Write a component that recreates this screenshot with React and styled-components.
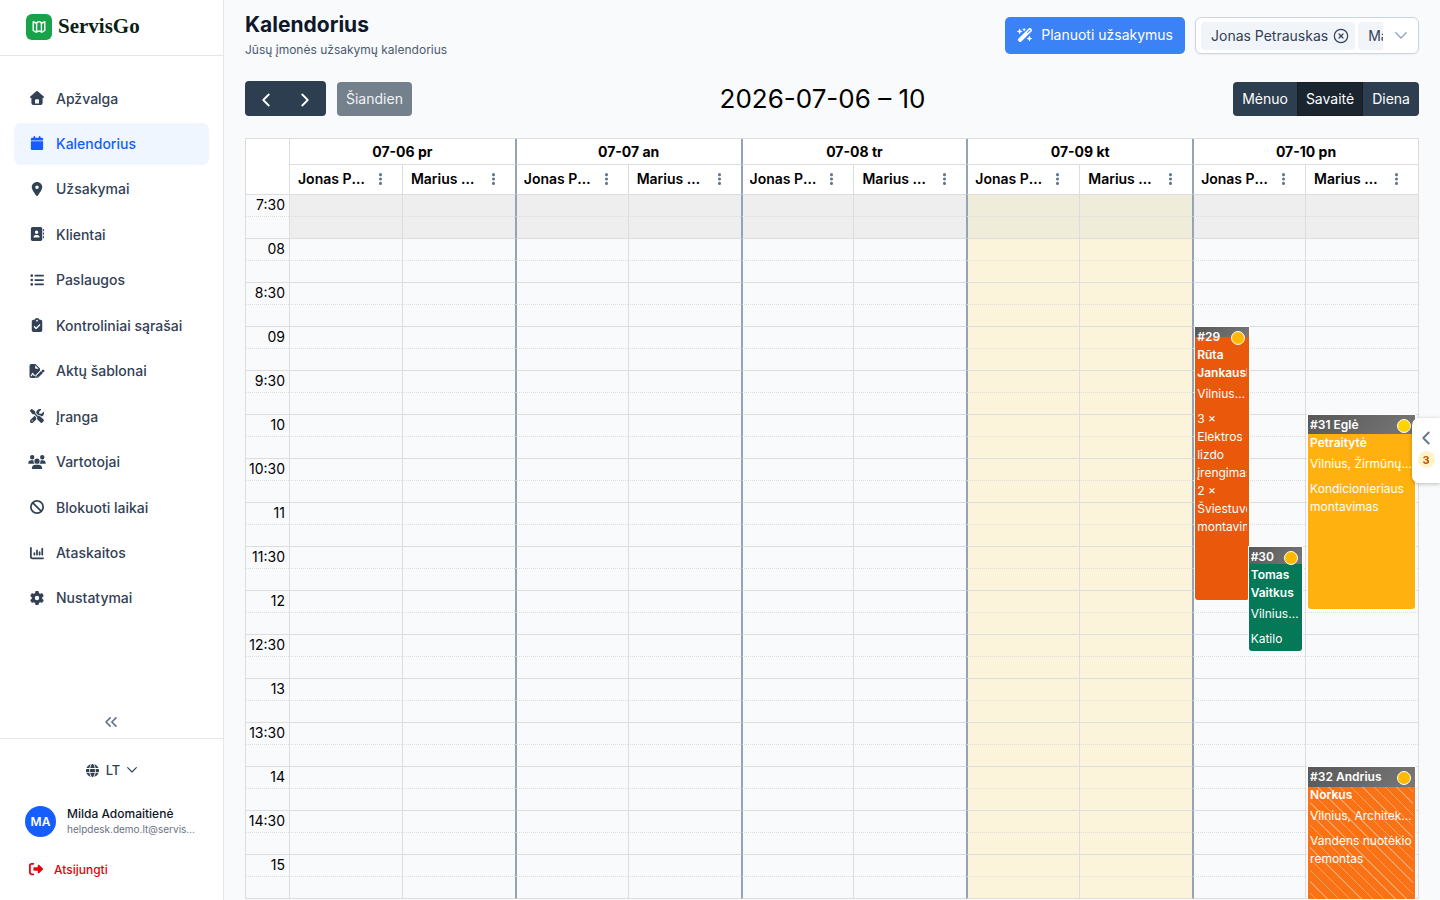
import React from "react";
import styled, { createGlobalStyle, css } from "styled-components";
import {
  FaCalendar,
  FaLocationDot,
  FaAddressBook,
  FaListUl,
  FaClipboardCheck,
  FaScrewdriverWrench,
  FaUsers,
  FaBan,
  FaChartColumn,
  FaGear,
  FaGlobe,
  FaRightFromBracket,
  FaWandMagicSparkles,
  FaEllipsisVertical,
} from "react-icons/fa6";
import { ChevronLeft, ChevronRight, ChevronsLeft, CircleX } from "lucide-react";

const line = "#dddddd";
const ink = "#334155";

const GlobalStyle = createGlobalStyle`
  *, *::before, *::after { box-sizing: border-box; }
  body {
    margin: 0;
    background: #f9fafc;
    color: #000;
    font-family: Inter, "Liberation Sans", sans-serif;
    font-size: 14px;
  }
  button { font: inherit; border: 0; padding: 0; background: none; color: inherit; cursor: pointer; }
  a { color: inherit; text-decoration: none; }
  h1, h2, p, ul { margin: 0; padding: 0; }
  svg { display: block; flex: none; }
`;

const Shell = styled.div`
  display: flex;
  height: 100vh;
  overflow: hidden;
`;

const Sidebar = styled.aside`
  flex: none;
  display: flex;
  flex-direction: column;
  width: 224px;
  background: #fff;
  border-right: 1px solid #e5e7eb;
`;

const Brand = styled.a`
  display: flex;
  align-items: center;
  gap: 6px;
  height: 56px;
  padding: 0 26px 2px;
  border-bottom: 1px solid #e5e7eb;
  color: #0b1f14;
  font-family: "Liberation Serif", serif;
  font-size: 21px;
  font-weight: 700;
`;

const BrandMark = styled.span`
  display: grid;
  place-items: center;
  width: 26px;
  height: 26px;
  border-radius: 6px;
  background: #16a34a;
`;

const NavList = styled.ul`
  display: flex;
  flex-direction: column;
  justify-content: space-between;
  min-height: 542px;
  margin: 22px 14px 0;
  list-style: none;
`;

const NavLink = styled.a`
  display: flex;
  align-items: center;
  gap: 10px;
  height: 42px;
  padding: 0 14px 2px;
  border-radius: 7px;
  color: ${(p) => (p.$active ? "#155dfc" : ink)};
  background: ${(p) => (p.$active ? "#eff6ff" : "transparent")};
  font-weight: 500;
`;

const NavIcon = styled.span`
  svg { width: 18px; height: 14px; }
`;

const CollapseButton = styled.button`
  display: flex;
  justify-content: center;
  margin-top: auto;
  padding: 6px 2px 6px 0;
  color: #64748b;
`;

const SidebarFooter = styled.div`
  display: flex;
  flex-direction: column;
  height: 162px;
  border-top: 1px solid #e5e7eb;
`;

const LanguageButton = styled.button`
  display: flex;
  align-items: center;
  justify-content: center;
  gap: 7px;
  margin-top: 21px;
  height: 20px;
  color: ${ink};
  font-size: 13px;
  font-weight: 500;
`;

const User = styled.div`
  display: flex;
  align-items: center;
  gap: 11px;
  margin: 26px 25px 0;
`;

const Avatar = styled.span`
  flex: none;
  display: grid;
  place-items: center;
  width: 31px;
  height: 31px;
  border-radius: 50%;
  background: #155dfc;
  color: #fff;
  font-size: 12px;
  font-weight: 600;
`;

const UserText = styled.div`
  min-width: 0;
  font-size: 12px;
  font-weight: 500;
  line-height: 16px;
  color: #0f172a;
`;

const UserMail = styled.p`
  overflow: hidden;
  text-overflow: ellipsis;
  white-space: nowrap;
  color: #6b7280;
  font-size: 10px;
  font-weight: 400;
  line-height: 15px;
`;

const LogoutButton = styled.button`
  display: flex;
  align-items: center;
  gap: 11px;
  margin: 23px 29px 0;
  height: 18px;
  color: #e7000b;
  font-size: 12px;
  font-weight: 500;
`;

const Main = styled.main`
  flex: 1;
  min-width: 0;
  display: flex;
  flex-direction: column;
  padding: 0 21px 1px;
`;

const PageHeader = styled.header`
  display: flex;
  justify-content: space-between;
  align-items: flex-start;
  padding-top: 12px;
  height: 81px;
`;

const PageTitle = styled.h1`
  color: #0f172a;
  font-size: 21px;
  font-weight: 700;
  line-height: 26px;
`;

const PageSubtitle = styled.p`
  margin-top: 4px;
  color: #4b5b70;
  font-size: 12px;
  line-height: 16px;
`;

const HeaderActions = styled.div`
  display: flex;
  gap: 10px;
  padding-top: 5px;
`;

const PlanButton = styled.button`
  display: flex;
  align-items: center;
  gap: 8px;
  height: 37px;
  padding: 0 12px 2px;
  border-radius: 5px;
  background: #3b82f6;
  color: #fff;
  white-space: nowrap;
`;

const MultiSelect = styled.div`
  display: flex;
  align-items: center;
  width: 224px;
  height: 37px;
  padding: 0 11px 0 5px;
  border: 1px solid #cbd5e1;
  border-radius: 6px;
  background: #fff;
  box-shadow: 0 1px 2px rgba(18, 18, 23, 0.05);
  color: ${ink};
`;

const Chips = styled.div`
  flex: 1;
  display: flex;
  gap: 3px;
  overflow: hidden;
`;

const Chip = styled.span`
  flex: none;
  display: flex;
  align-items: center;
  gap: 5px;
  height: 28px;
  padding: 0 6px 0 10px;
  border-radius: 4px;
  background: #f1f5f9;
  white-space: nowrap;
`;

const SelectToggle = styled.button`
  margin-left: 12px;
  color: #94a3b8;
`;

const Toolbar = styled.div`
  display: flex;
  justify-content: space-between;
  align-items: center;
  height: 35px;
  margin-bottom: 22px;
`;

const ToolbarGroup = styled.div`
  display: flex;
  align-items: flex-end;
  gap: 11px;
  height: 35px;
`;

const ButtonGroup = styled.div`
  display: flex;
  overflow: hidden;
  border-radius: 4px;
`;

const toolbarButton = css`
  display: grid;
  place-items: center;
  height: 34px;
  padding: 0 10px 2px;
  background: #2c3e50;
  color: #fff;
`;

const ArrowButton = styled.button`
  ${toolbarButton}
  width: 41px;
  height: 35px;
  padding: 3px 0 0;
  & + & { width: 40px; padding-right: 2px; }
`;

const TodayButton = styled.button`
  ${toolbarButton}
  padding: 0 9px 2px;
  border-radius: 4px;
  background: #74808c;
  color: #f1f3f5;
`;

const ViewButton = styled.button`
  ${toolbarButton}
  padding: 0 9px 2px;
  ${(p) => p.$active && "background: #1a252f; box-shadow: inset 0 0 0 1px #151e27;"}
`;

const RangeTitle = styled.h2`
  font-size: 26px;
  font-weight: 400;
  line-height: 35px;
`;

const CalendarFrame = styled.section`
  position: relative;
  flex: 1;
  min-height: 0;
  overflow: hidden;
  border: 1px solid ${line};
  border-bottom: 0;
`;

const CalendarTable = styled.table`
  width: 100%;
  table-layout: fixed;
  border-collapse: separate;
  border-spacing: 0;
`;

const AxisColumn = styled.col`
  width: 43px;
`;

const edge = (p) => (p.$dayStart ? "2px solid #94a3b8" : `1px solid ${line}`);

const CornerHead = styled.th`
  padding: 0;
  background: #fff;
`;

const DayHead = styled.th`
  height: 25px;
  padding: 0;
  background: #fff;
  border-left: ${edge};
  font-weight: 700;
`;

const ResourceHead = styled.th`
  height: 30px;
  padding: 0 0 2px;
  background: #fff;
  border-top: 1px solid ${line};
  border-left: ${edge};
  font-weight: 600;
`;

const ResourceLabel = styled.div`
  display: flex;
  align-items: center;
  justify-content: space-between;
  gap: 6px;
  padding: 0 16px 0 ${(p) => (p.$dayStart ? 7 : 8)}px;
`;

const ResourceName = styled.span`
  overflow: hidden;
  text-overflow: ellipsis;
  white-space: nowrap;
`;

const MenuButton = styled.button`
  flex: none;
  width: 11px;
  color: #64748b;
  svg { width: 11px; height: 14px; }
`;

const AxisCell = styled.th`
  height: 22px;
  padding: 0 4px 2px 0;
  border-top: 1px ${(p) => (p.$minor ? "dotted" : "solid")} ${line};
  font-weight: 400;
  line-height: 18px;
  text-align: right;
`;

const Slot = styled.td`
  height: 22px;
  padding: 0;
  border-top: 1px ${(p) => (p.$minor ? "dotted" : "solid")} ${line};
  border-left: ${edge};
  background: ${(p) =>
    p.$closed ? (p.$today ? "#efecd9" : "#eeeeee") : p.$today ? "#fbf4db" : "transparent"};
`;

const EventLayer = styled.div`
  position: absolute;
  inset: 56px 0 0 43px;
  display: grid;
  grid-template-columns: repeat(10, 1fr);
  pointer-events: none;
`;

const Lane = styled.div`
  position: relative;
  grid-column: ${(p) => p.$column};
  margin: 0 3px;
`;

const EventCard = styled.article`
  position: absolute;
  top: ${(p) => p.$slot * 22}px;
  left: ${(p) => (p.$half === "right" ? "50%" : 0)};
  width: ${(p) => (p.$half ? "50%" : "100%")};
  height: ${(p) => p.$height}px;
  padding: 1px 2px;
  overflow: hidden;
  border-radius: 0 0 3px 3px;
  background: linear-gradient(135deg, #575757, #787878) top / 100% ${(p) => p.$band}px no-repeat,
    ${(p) => p.$striped
      ? "repeating-linear-gradient(45deg, transparent 0 7px, rgba(255, 255, 255, 0.32) 7px 8px) content-box,"
      : ""}
    ${(p) => p.$color};
  box-shadow: 0 0 0 1px #fff;
  color: #fff;
  font-size: 12px;
  line-height: 18px;
`;

const EventTitle = styled.p`
  overflow: hidden;
  font-weight: 600;
`;

const EventAddress = styled.p`
  margin: 3px 0 7px;
  overflow: hidden;
  text-overflow: ellipsis;
  white-space: nowrap;
`;

const EventBody = styled.div`
  overflow: hidden;
`;

const StatusDot = styled.span`
  position: absolute;
  top: 4px;
  right: 4px;
  width: 14px;
  height: 14px;
  border: 1px solid #fff;
  border-radius: 50%;
  background: ${(p) => p.$color};
`;

const SideTab = styled.button`
  position: fixed;
  top: 418px;
  right: 0;
  display: flex;
  flex-direction: column;
  align-items: center;
  gap: 2px;
  width: 28px;
  height: 65px;
  padding-top: 9px;
  border-radius: 7px 0 0 7px;
  background: #fff;
  box-shadow: 0 1px 4px rgba(0, 0, 0, 0.25);
  color: #64748b;
`;

const CountBadge = styled.span`
  display: grid;
  place-items: center;
  width: 17px;
  height: 17px;
  border-radius: 50%;
  background: #fef3c6;
  color: #bb4d00;
  font-size: 11px;
  font-weight: 700;
`;

function HouseIcon() {
  return (
    <svg viewBox="0 0 18 14" fill="currentColor">
      <path
        fillRule="evenodd"
        d="M8.3.3a1 1 0 0 1 1.4 0l6 5.3c.6.6.2 1.5-.6 1.5h-.5v4.9a2 2 0 0 1-2 2H5.4a2 2 0 0 1-2-2V7.100h-.5c-.8 0-1.200-.9-.6-1.500ZM8 8.300a1 1 0 0 0-1 1v3.200h4V9.300a1 1 0 0 0-1-1Z"
      />
    </svg>
  );
}

function FileSignIcon() {
  return (
    <svg viewBox="0 0 18 14" fill="none">
      <path
        fill="currentColor"
        fillRule="evenodd"
        d="M1.500 1.800A1.800 1.800 0 0 1 3.300 0H7.500L12 4.500V6.600L8.200 10.400 7.400 14H3.300A1.800 1.800 0 0 1 1.500 12.200ZM7.200 1.300V4a.8.8 0 0 0 .8.8h2.700Z"
      />
      <path stroke="#fff" strokeWidth="1.100" strokeLinecap="round" strokeLinejoin="round" d="M3.300 11.700 4.600 9.300 5.700 11.300H7.400" />
      <path stroke="currentColor" strokeWidth="2.600" d="M9.600 12.400 14 8" />
      <path stroke="currentColor" strokeWidth="2.600" strokeLinecap="round" d="M14.900 7.200 15.100 7" />
      <path fill="currentColor" d="M8.500 11.200 10.700 13.400 8 14Z" />
    </svg>
  );
}

function ChevronDown({ width }) {
  return (
    <svg width={width} viewBox="0 0 12 7" fill="none" stroke="currentColor" strokeWidth="1.400" strokeLinecap="round" strokeLinejoin="round">
      <path d="M.8.8 6 6 11.200.8" />
    </svg>
  );
}

function MapLogo() {
  return (
    <svg width="14" height="14" viewBox="0 0 14 14" fill="none" stroke="#fff" strokeWidth="1.4" strokeLinejoin="round">
      <path d="M1.2 1.800C2.400 1.800 2.800 3 4 3S5.500 1.600 7 1.600 8.800 3 10 3 11.600 1.800 12.800 1.800V10.600C11.600 10.600 11.200 12 10 12S8.500 11 7 11 5.200 12 4 12 2.400 10.600 1.200 10.600Z" />
      <path d="M4.600 2.800V11.800M9.400 2.800V11.800" />
    </svg>
  );
}

const navItems = [
  ["Apžvalga", HouseIcon],
  ["Kalendorius", FaCalendar],
  ["Užsakymai", FaLocationDot],
  ["Klientai", FaAddressBook],
  ["Paslaugos", FaListUl],
  ["Kontroliniai sąrašai", FaClipboardCheck],
  ["Aktų šablonai", FileSignIcon],
  ["Įranga", FaScrewdriverWrench],
  ["Vartotojai", FaUsers],
  ["Blokuoti laikai", FaBan],
  ["Ataskaitos", FaChartColumn],
  ["Nustatymai", FaGear],
];

const days = ["07-06 pr", "07-07 an", "07-08 tr", "07-09 kt", "07-10 pn"];
const TODAY = 3;
const resources = ["Jonas Petrauskas", "Marius Kazlauskas"];
const columns = days.flatMap((_, day) => resources.map((name, r) => ({ day, name, first: r === 0 })));

const times = [
  "7:30", "08", "8:30", "09", "9:30", "10", "10:30", "11", "11:30", "12",
  "12:30", "13", "13:30", "14", "14:30", "15", "15:30",
];

const events = [
  {
    column: 9, slot: 6, height: 273, band: 10, half: "left", color: "#ea580c", dot: "#ffb900",
    title: "#29 Rūta Jankauskienė", address: "Vilnius, Gedimino pr.",
    body: ["3 × Elektros lizdo įrengimas", "2 × Šviestuvo montavimas"],
  },
  {
    column: 9, slot: 16, height: 104, band: 17, half: "right", color: "#047857", dot: "#ffb900",
    title: "#30 Tomas Vaitkus", address: "Vilnius, Kalvarijų g.",
    body: ["Katilo"],
  },
  {
    column: 10, slot: 10, height: 194, band: 19, color: "#ffb20f", dot: "#ffd500",
    title: "#31 Eglė Petraitytė", address: "Vilnius, Žirmūnų gatvė",
    body: ["Kondicionieriaus montavimas"],
  },
  {
    column: 10, slot: 26, height: 194, band: 20, color: "#f97316", dot: "#ffb900", striped: true,
    title: "#32 Andrius Norkus", address: "Vilnius, Architektų gatvė",
    body: ["Vandens nuotėkio remontas"],
  },
];

function EventItem({ event }) {
  return (
    <EventCard
      $slot={event.slot}
      $height={event.height}
      $band={event.band}
      $half={event.half}
      $color={event.color}
      $striped={event.striped}
    >
      <EventTitle>{event.title}</EventTitle>
      <EventAddress>{event.address}</EventAddress>
      <EventBody>
        {event.body.map((text) => (
          <p key={text}>{text}</p>
        ))}
      </EventBody>
      <StatusDot $color={event.dot} />
    </EventCard>
  );
}

export default function App() {
  return (
    <>
      <GlobalStyle />
      <Shell>
        <Sidebar>
          <Brand href="#">
            <BrandMark>
              <MapLogo />
            </BrandMark>
            ServisGo
          </Brand>
          <nav>
            <NavList>
              {navItems.map(([label, Icon]) => (
                <li key={label}>
                  <NavLink href="#" $active={label === "Kalendorius"}>
                    <NavIcon>
                      <Icon />
                    </NavIcon>
                    {label}
                  </NavLink>
                </li>
              ))}
            </NavList>
          </nav>
          <CollapseButton aria-label="Suskleisti meniu">
            <ChevronsLeft size={20} />
          </CollapseButton>
          <SidebarFooter>
            <LanguageButton>
              <FaGlobe size={13} />
              LT
              <ChevronDown width={10} />
            </LanguageButton>
            <User>
              <Avatar>MA</Avatar>
              <UserText>
                <p>Milda Adomaitienė</p>
                <UserMail>helpdesk.demo.lt@servisgo.lt</UserMail>
              </UserText>
            </User>
            <LogoutButton>
              <FaRightFromBracket size={14} />
              Atsijungti
            </LogoutButton>
          </SidebarFooter>
        </Sidebar>

        <Main>
          <PageHeader>
            <div>
              <PageTitle>Kalendorius</PageTitle>
              <PageSubtitle>Jūsų įmonės užsakymų kalendorius</PageSubtitle>
            </div>
            <HeaderActions>
              <PlanButton>
                <FaWandMagicSparkles size={16} />
                Planuoti užsakymus
              </PlanButton>
              <MultiSelect>
                <Chips>
                  <Chip>
                    Jonas Petrauskas
                    <button aria-label="Pašalinti Jonas Petrauskas">
                      <CircleX size={16} strokeWidth={1.8} />
                    </button>
                  </Chip>
                  <Chip>Marius Kazlauskas</Chip>
                </Chips>
                <SelectToggle aria-label="Pasirinkti darbuotojus">
                  <ChevronDown width={12} />
                </SelectToggle>
              </MultiSelect>
            </HeaderActions>
          </PageHeader>

          <Toolbar>
            <ToolbarGroup>
              <ButtonGroup>
                <ArrowButton aria-label="Ankstesnė savaitė">
                  <ChevronLeft size={22} />
                </ArrowButton>
                <ArrowButton aria-label="Kita savaitė">
                  <ChevronRight size={22} />
                </ArrowButton>
              </ButtonGroup>
              <TodayButton disabled>Šiandien</TodayButton>
            </ToolbarGroup>
            <RangeTitle>2026-07-06 – 10</RangeTitle>
            <ToolbarGroup>
              <ButtonGroup>
                <ViewButton>Mėnuo</ViewButton>
                <ViewButton $active>Savaitė</ViewButton>
                <ViewButton>Diena</ViewButton>
              </ButtonGroup>
            </ToolbarGroup>
          </Toolbar>

          <CalendarFrame>
            <CalendarTable>
              <colgroup>
                <AxisColumn />
                {columns.map((c) => (
                  <col key={c.day + c.name} />
                ))}
              </colgroup>
              <thead>
                <tr>
                  <CornerHead rowSpan={2} />
                  {days.map((day, i) => (
                    <DayHead key={day} colSpan={2} $dayStart={i > 0}>
                      {day}
                    </DayHead>
                  ))}
                </tr>
                <tr>
                  {columns.map((c) => (
                    <ResourceHead key={c.day + c.name} $dayStart={c.first && c.day > 0}>
                      <ResourceLabel $dayStart={c.first && c.day > 0}>
                        <ResourceName>{c.name}</ResourceName>
                        <MenuButton aria-label="Veiksmai">
                          <FaEllipsisVertical />
                        </MenuButton>
                      </ResourceLabel>
                    </ResourceHead>
                  ))}
                </tr>
              </thead>
              <tbody>
                {times.flatMap((time, t) =>
                  [false, true].map((minor) => (
                    <tr key={time + minor}>
                      <AxisCell $minor={minor}>{minor ? null : time}</AxisCell>
                      {columns.map((c) => (
                        <Slot
                          key={c.day + c.name}
                          $minor={minor}
                          $closed={t === 0}
                          $today={c.day === TODAY}
                          $dayStart={c.first && c.day > 0}
                        />
                      ))}
                    </tr>
                  ))
                )}
              </tbody>
            </CalendarTable>
            <EventLayer>
              {[9, 10].map((column) => (
                <Lane key={column} $column={column}>
                  {events
                    .filter((e) => e.column === column)
                    .map((e) => (
                      <EventItem key={e.title} event={e} />
                    ))}
                </Lane>
              ))}
            </EventLayer>
          </CalendarFrame>
        </Main>

        <SideTab aria-label="Neplanuoti užsakymai">
          <ChevronLeft size={22} />
          <CountBadge>3</CountBadge>
        </SideTab>
      </Shell>
    </>
  );
}
